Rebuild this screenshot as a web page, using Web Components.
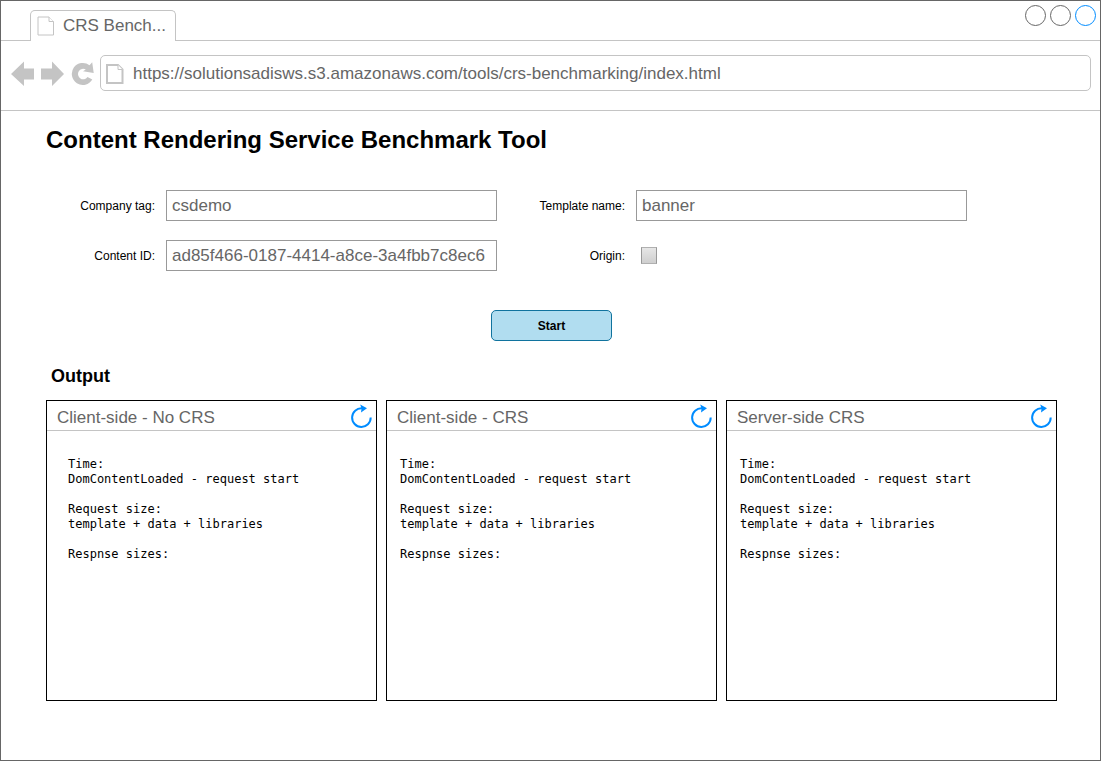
<!DOCTYPE html>
<html lang="en">
<head>
<meta charset="utf-8">
<title>CRS Benchmarking</title>
<style>
  body { margin: 0; background: #fff; font-family: "Liberation Sans", Arial, sans-serif; }
</style>
</head>
<body>
<browser-window>
  <browser-tab slot="tabs">CRS Bench...</browser-tab>
  <address-bar slot="toolbar" url="https://solutionsadisws.s3.amazonaws.com/tools/crs-benchmarking/index.html"></address-bar>
  <benchmark-page>
    <span slot="title">Content Rendering Service Benchmark Tool</span>
    <benchmark-form slot="form">
      <text-field label="Company tag:" value="csdemo"></text-field>
      <text-field label="Template name:" value="banner"></text-field>
      <text-field label="Content ID:" value="ad85f466-0187-4414-a8ce-3a4fbb7c8ec6"></text-field>
      <check-field label="Origin:"></check-field>
    </benchmark-form>
    <output-panel label="Client-side - No CRS" roomy></output-panel>
    <output-panel label="Client-side - CRS"></output-panel>
    <output-panel label="Server-side CRS"></output-panel>
  </benchmark-page>
</browser-window>

<script>
const define = (name, html, setup) => {
  const template = document.createElement('template');
  template.innerHTML = html;
  customElements.define(name, class extends HTMLElement {
    constructor() {
      super();
      this.attachShadow({ mode: 'open' }).append(template.content.cloneNode(true));
    }
    connectedCallback() { if (setup) setup(this, this.shadowRoot); }
  });
};

define('browser-window', `
  <style>
    :host { display: flex; flex-direction: column; box-sizing: border-box; min-height: 100vh; border: 1px solid #666; }
    header { display: flex; align-items: flex-end; justify-content: space-between; height: 40px; padding: 0 4px 0 29px; box-sizing: border-box; border-bottom: 1px solid #c4c4c4; }
    .controls { display: flex; gap: 4px; align-self: flex-start; padding-top: 4px; }
    button { width: 21px; height: 21px; padding: 0; box-sizing: border-box; border: 1px solid #666; border-radius: 50%; background: #fff; }
    button:last-child { border-color: #008cff; }
    nav { border-bottom: 1px solid #c4c4c4; }
    main { flex: 1; }
  </style>
  <header>
    <slot name="tabs"></slot>
    <div class="controls">
      <button type="button" aria-label="Minimize"></button>
      <button type="button" aria-label="Maximize"></button>
      <button type="button" aria-label="Close"></button>
    </div>
  </header>
  <nav><slot name="toolbar"></slot></nav>
  <main><slot></slot></main>
`);

define('page-icon', `
  <style>
    :host { display: block; width: 18px; height: 20px; flex: none; }
    svg { display: block; overflow: visible; }
    path { fill: #fff; stroke: #c4c4c4; stroke-width: var(--line, 1); }
    .fold { stroke-width: 1; }
  </style>
  <svg width="18" height="20" viewBox="0 0 18 20" aria-hidden="true">
    <path d="M1 1H12L16.500 5.500V19H1Z"/><path class="fold" d="M12 1V5.500H16.500"/>
  </svg>
`);

define('browser-tab', `
  <style>
    :host { display: flex; align-items: center; box-sizing: border-box; width: 146px; height: 31px; margin-bottom: -1px; padding: 0 6px; gap: 8px;
      border: 1px solid #c4c4c4; border-bottom: 0; border-radius: 5px 5px 0 0; background: #fff; color: #666; font-size: 17px; line-height: 20px; white-space: nowrap; }
  </style>
  <page-icon></page-icon><slot></slot>
`);

define('address-bar', `
  <style>
    :host { display: flex; align-items: center; padding: 14px 9px 19px 9px; gap: 5px; }
    .nav { display: flex; gap: 5px; padding-top: 2px; }
    button { display: block; padding: 0; border: 0; background: none; width: 25px; height: 26px; }
    svg { display: block; fill: #c4c4c4; }
    label { flex: 1; display: flex; align-items: center; gap: 9px; height: 36px; box-sizing: border-box; padding: 2px 5px 0; border: 1px solid #c4c4c4; border-radius: 5px; --line: 2; }
    input { flex: 1; min-width: 0; padding: 0; border: 0; outline: 0; background: none; color: #666; font: 17px/20px "Liberation Sans", Arial, sans-serif; }
  </style>
  <div class="nav">
    <button type="button" aria-label="Back"><svg width="25" height="26" viewBox="0 0 25 26"><path d="M1 13L14 0.500V7.500H24V18.500H14V25Z"/></svg></button>
    <button type="button" aria-label="Forward"><svg width="25" height="26" viewBox="0 0 25 26"><path d="M24 13L12 0.500V7.500H1V18.500H12V25Z"/></svg></button>
    <button type="button" aria-label="Reload"><svg width="25" height="26" viewBox="0 0 25 26"><path d="M19.500 4.200L22.200 1.300L23.700 12L13 10.200L15.800 8.500A5.200 5.200 0 1 0 17.500 16L22.300 18.500A11 11 0 1 1 19.500 4.200Z"/></svg></button>
  </div>
  <label><page-icon></page-icon><input type="text" aria-label="Address"></label>
`, (host, root) => { root.querySelector('input').value = host.getAttribute('url'); });

define('benchmark-page', `
  <style>
    :host { display: block; padding: 15px 43px 59px 45px; color: #000; }
    h1 { margin: 0; font-size: 24px; line-height: 28px; }
    h2 { margin: 24px 0 13px 5px; font-size: 18px; line-height: 22px; }
    .form { margin-top: 36px; }
    .panels { display: grid; grid-template-columns: repeat(3, minmax(0, 1fr)); gap: 9px; }
  </style>
  <h1><slot name="title"></slot></h1>
  <div class="form"><slot name="form"></slot></div>
  <h2>Output</h2>
  <section class="panels"><slot></slot></section>
`);

define('benchmark-form', `
  <style>
    :host { display: block; }
    form { margin: 0; }
    .fields { display: grid; grid-template-columns: minmax(0, 451fr) minmax(0, 459fr); gap: 19px 11px; padding-right: 90px; }
    ::slotted(:nth-child(odd)) { --label-width: 109px; }
    ::slotted(:nth-child(even)) { --label-width: 117px; }
    button { display: block; width: 121px; height: 31px; margin: 39px auto 0; padding: 0; box-sizing: border-box; border: 1px solid #10739e; border-radius: 5px; background: #b1ddf0; color: #000; font: bold 12px/14px "Liberation Sans", Arial, sans-serif; }
  </style>
  <form>
    <div class="fields"><slot></slot></div>
    <button type="button">Start</button>
  </form>
`);

const fieldStyle = `
    :host { display: grid; grid-template-columns: var(--label-width) minmax(0, 1fr); column-gap: 11px; align-items: center; min-height: 31px; }
    label { text-align: right; font-size: 12px; line-height: 14px; }`;

define('text-field', `
  <style>${fieldStyle}
    input { height: 31px; min-width: 0; width: 100%; box-sizing: border-box; padding: 0 5px; border: 1px solid #999; border-radius: 0; background: #fff; color: #666; outline: 0; font: 17px/20px "Liberation Sans", Arial, sans-serif; }
  </style>
  <label for="field"></label><input id="field" type="text">
`, (host, root) => {
  root.querySelector('label').textContent = host.getAttribute('label');
  root.querySelector('input').value = host.getAttribute('value');
});

define('check-field', `
  <style>${fieldStyle}
    input { appearance: none; box-sizing: border-box; width: 16px; height: 17px; margin: 0 5px; border: 1px solid #999; border-color: #b0b0b0 #999; background: linear-gradient(#e6e6e6, #cfcfcf); }
  </style>
  <label for="field"></label><input id="field" type="checkbox">
`, (host, root) => { root.querySelector('label').textContent = host.getAttribute('label'); });

define('output-panel', `
  <style>
    :host { display: block; box-sizing: border-box; min-height: 301px; border: 1px solid #000; }
    header { display: flex; align-items: center; justify-content: space-between; height: 30px; box-sizing: border-box; padding: 0 4px 0 10px; border-bottom: 1px solid #c4c4c4; }
    h3 { margin: 0; padding-top: 4px; color: #666; font-size: 17px; line-height: 20px; font-weight: normal; }
    button { padding: 0; border: 0; background: none; }
    svg { display: block; }
    pre { margin: 0; padding: 26px 13px; font: 12px/15px "DejaVu Sans Mono", monospace; }
    :host([roomy]) pre { padding-left: 21px; }
  </style>
  <header>
    <h3></h3>
    <button type="button" aria-label="Refresh"><svg width="22" height="24" viewBox="0 0 22 24"><path d="M12 4.300A9.300 9.300 0 1 0 20.700 13.500" fill="none" stroke="#008cff" stroke-width="2"/><path d="M10.200 0.500L17 4.300L11 8.500L11.500 4.500Z" fill="#008cff"/></svg></button>
  </header>
  <pre>Time:
DomContentLoaded - request start

Request size:
template + data + libraries

Respnse sizes:</pre>
`, (host, root) => { root.querySelector('h3').textContent = host.getAttribute('label'); });
</script>
</body>
</html>
